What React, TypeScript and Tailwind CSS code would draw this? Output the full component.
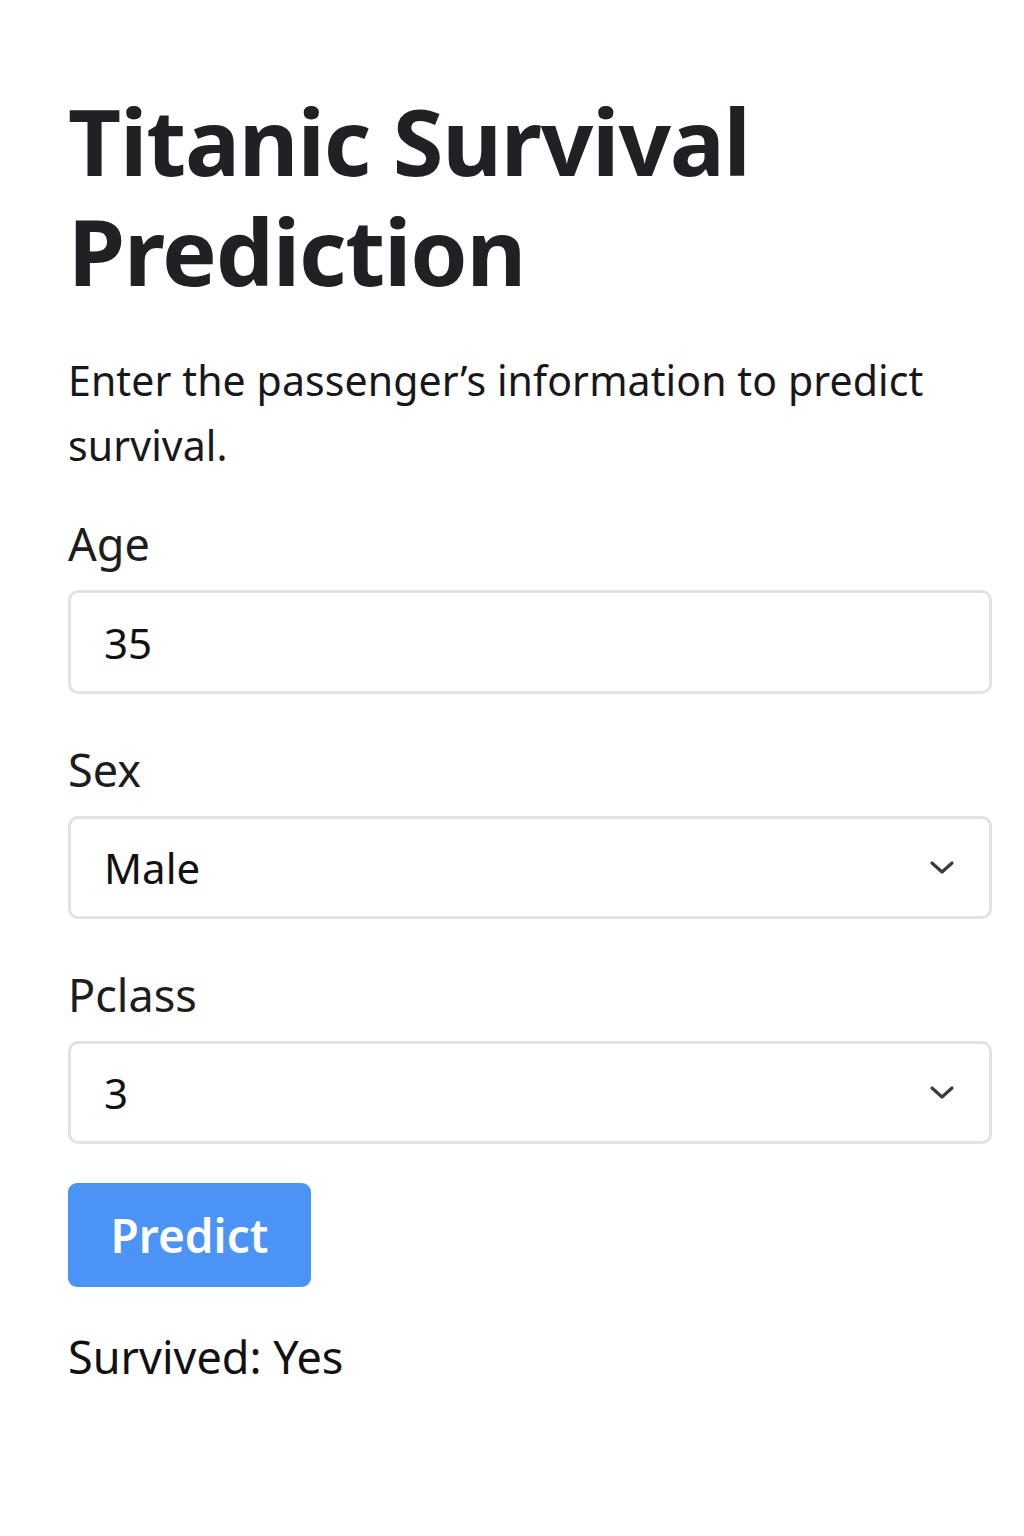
import React, { useState } from 'react'

const font = { fontFamily: '"Noto Sans", "Open Sans", sans-serif' }

const Chevron = () => (
  <svg width="26" height="16" viewBox="0 0 26 16" fill="none" className="pointer-events-none">
    <path d="M3 3 L13 12 L23 3" stroke="#3a3a40" strokeWidth="3.2" strokeLinecap="round" strokeLinejoin="round" />
  </svg>
)

export default function App() {
  const [age, setAge] = useState('35')
  const [sex, setSex] = useState('Male')
  const [pclass, setPclass] = useState('3')

  return (
    <div className="min-h-[1536px] w-[1024px] bg-white text-[#1d1d20]" style={font}>
      <div className="pl-[68px] pr-[24px] pt-[86px]">
        <h1 className="text-[92px] font-bold leading-[110px] tracking-[-1.2px] text-[#212125]">
          Titanic Survival Prediction
        </h1>

        <p className="mt-[42px] text-[41px] leading-[65px] tracking-[0.1px] text-[#18181b]">
          Enter the passenger’s information to predict survival.
        </p>

        {/* Age */}
        <label className="mt-[42px] block text-[45px] leading-[48px]">Age</label>
        <input
          value={age}
          onChange={(e) => setAge(e.target.value)}
          className="mt-[22px] block h-[104px] w-[924px] rounded-[10px] border-[3px] border-[#e2e2e6] bg-white px-[33px] text-[42px] text-[#111] outline-none"
        />

        {/* Sex */}
        <label className="mt-[52px] block text-[45px] leading-[48px]">Sex</label>
        <div className="relative mt-[22px] w-[924px]">
          <select
            value={sex}
            onChange={(e) => setSex(e.target.value)}
            className="block h-[103px] w-full appearance-none rounded-[10px] border-[3px] border-[#e2e2e6] bg-white px-[33px] text-[42px] text-[#111] outline-none"
          >
            <option>Male</option>
            <option>Female</option>
          </select>
          <div className="absolute right-[37px] top-1/2 -translate-y-1/2">
            <Chevron />
          </div>
        </div>

        {/* Pclass */}
        <label className="mt-[52px] block text-[45px] leading-[48px]">Pclass</label>
        <div className="relative mt-[22px] w-[924px]">
          <select
            value={pclass}
            onChange={(e) => setPclass(e.target.value)}
            className="block h-[103px] w-full appearance-none rounded-[10px] border-[3px] border-[#e2e2e6] bg-white px-[33px] text-[42px] text-[#111] outline-none"
          >
            <option>1</option>
            <option>2</option>
            <option>3</option>
          </select>
          <div className="absolute right-[37px] top-1/2 -translate-y-1/2">
            <Chevron />
          </div>
        </div>

        <button className="mt-[39px] flex h-[104px] w-[243px] items-center justify-center rounded-[9px] bg-[#4b93f4] text-[46px] font-semibold text-white">
          Predict
        </button>

        <p className="mt-[40px] text-[45px] leading-[60px] text-[#111]">Survived: Yes</p>
      </div>
    </div>
  )
}
